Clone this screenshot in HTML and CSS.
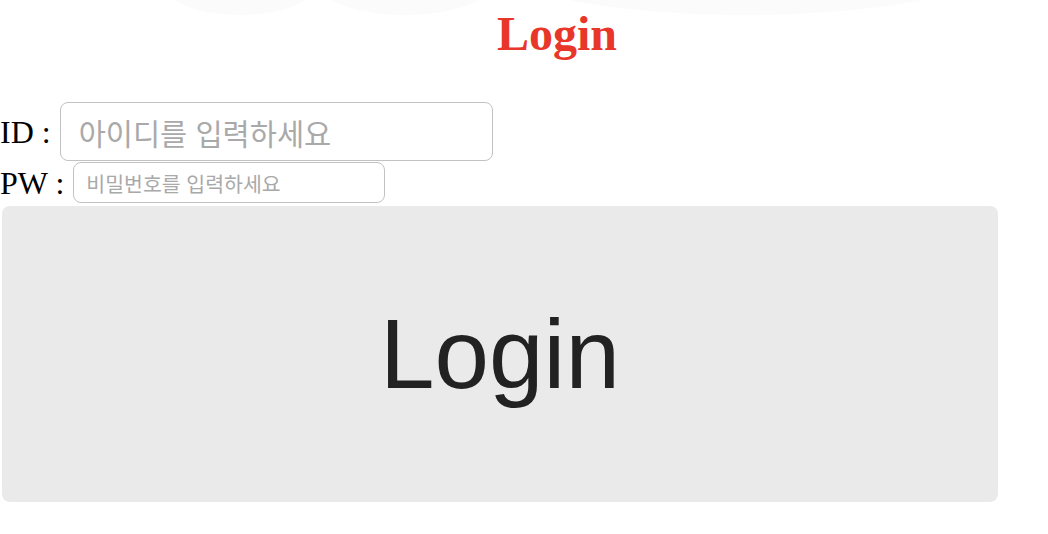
FILE: index.html
```html
<!DOCTYPE html>
<html lang="ko">
<head>
<meta charset="utf-8">
<title>Login</title>
<link rel="stylesheet" href="styles.css">
</head>
<body>
<svg class="deco" width="1048" height="20" viewBox="0 0 1048 20" aria-hidden="true">
  <ellipse cx="240" cy="-22" rx="82" ry="37" fill="#fbfbfb"/>
  <ellipse cx="405" cy="-22" rx="92" ry="37" fill="#fbfbfb"/>
  <ellipse cx="745" cy="-40" rx="258" ry="55" fill="#fbfbfb"/>
</svg>
<h1 class="title">Login</h1>
<form class="login-form">
  <div class="row">
    <label class="label" for="id">ID :</label>
    <input class="input input-id" id="id" type="text" placeholder="아이디를 입력하세요">
  </div>
  <div class="row">
    <label class="label" for="pw">PW :</label>
    <input class="input input-pw" id="pw" type="password" placeholder="비밀번호를 입력하세요">
  </div>
  <button class="login-btn" type="button">Login</button>
</form>
</body>
</html>
```
FILE: styles.css
```css
html, body {
  margin: 0;
  padding: 0;
  background: #ffffff;
}
body {
  position: relative;
  font-family: "Liberation Serif", "Times New Roman", serif;
  color: #000;
}
.deco {
  position: absolute;
  top: 0;
  left: 0;
}
.title {
  position: relative;
  margin: 7px 0 0 0;
  padding-left: 66px;
  text-align: center;
  font-family: "Liberation Serif", "Times New Roman", serif;
  font-weight: bold;
  font-size: 48px;
  line-height: 53px;
  color: #e8372a;
}
.login-form {
  margin-top: 42px;
  display: flex;
  flex-direction: column;
  align-items: flex-start;
}
.row {
  display: flex;
  align-items: center;
  gap: 9px;
}
.row + .row {
  margin-top: 1px;
}
.label {
  font-family: "Liberation Serif", "Times New Roman", serif;
  font-size: 32px;
  line-height: 36px;
  color: #000;
}
.input {
  box-sizing: border-box;
  border: 1px solid #c2c2c2;
  border-radius: 8px;
  background: #fff;
  font-family: "Noto Sans CJK KR", "Noto Sans", sans-serif;
  color: #333;
  outline: none;
}
.input::placeholder {
  color: #a9a9a9;
}
.input-id {
  width: 433px;
  height: 59px;
  padding: 0 18px;
  font-size: 29.5px;
}
.input-pw {
  width: 312px;
  height: 41px;
  padding: 0 12px;
  font-size: 20.5px;
}
.login-btn {
  margin: 3px 0 0 2px;
  width: 996px;
  height: 296px;
  border: none;
  border-radius: 8px;
  background: #eaeaea;
  color: #222;
  font-family: "Liberation Sans", Arial, sans-serif;
  font-size: 98px;
  padding: 0;
  cursor: pointer;
}
```
